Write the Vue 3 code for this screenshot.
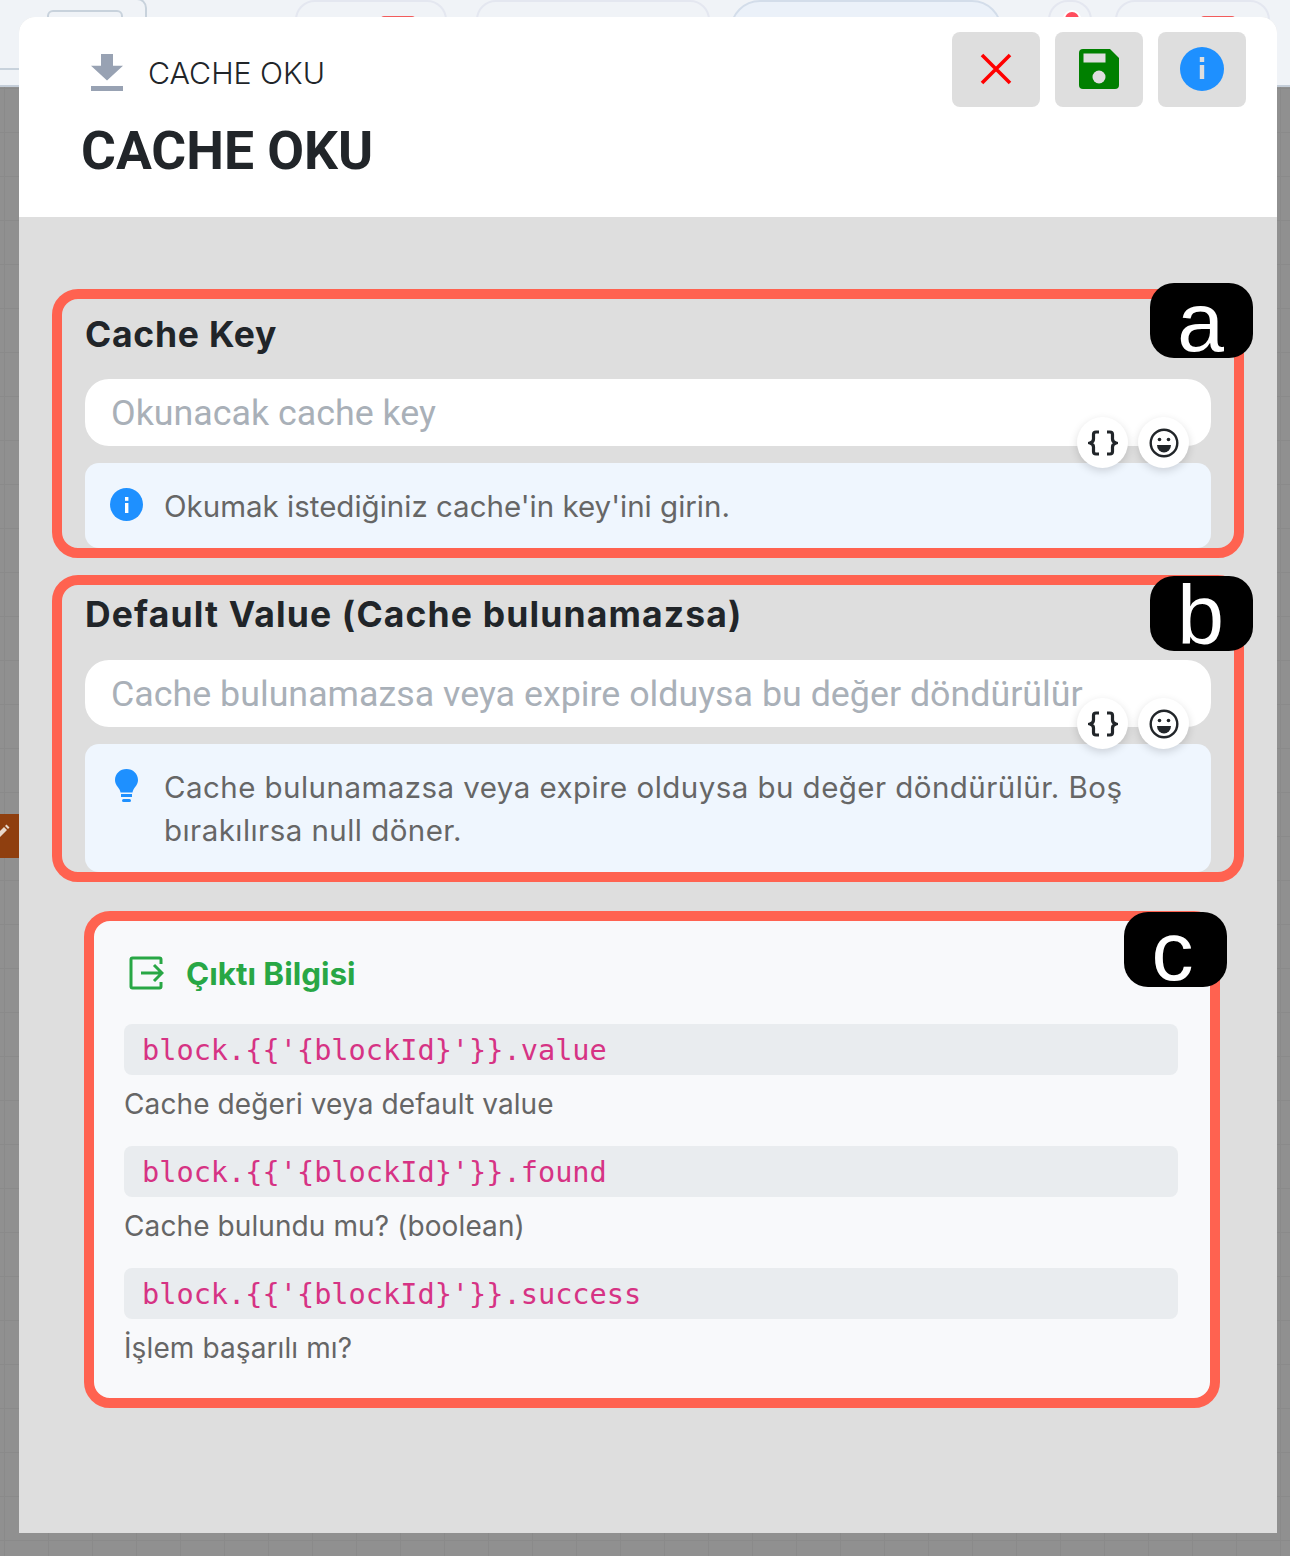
<script setup>
const outputs = [
  { name: 'value', desc: 'Cache değeri veya default value' },
  { name: 'found', desc: 'Cache bulundu mu? (boolean)' },
  { name: 'success', desc: 'İşlem başarılı mı?' }
]
const prefix = "block.{{'{blockId}'}}."
</script>

<template>
  <div class="page">
    <header class="topbar">
      <div class="tool-group"><span class="tool-inner"></span></div>
      <div class="tab t1"><i class="red-cap"></i></div>
      <div class="tab t2"></div>
      <div class="tab t3"></div>
      <div class="tab t4"><i class="red-dot"></i></div>
      <div class="tab t5"><i class="red-cap"></i></div>
    </header>
    <div class="canvas">
      <div class="node-edge">
        <svg width="14" height="14" viewBox="0 0 14 14"><path d="M0 14l1-4 7-7 3 3-7 7zM9 2l1.500-1.500 3 3L12 5z" fill="#e8d9cc"/></svg>
      </div>
    </div>

    <section class="modal">
      <div class="modal-head">
        <div class="head-main">
          <div class="crumb">
            <svg class="dl" viewBox="0 0 32 37"><path d="M10 0h12v15h10L16 34 0 15h10z" transform="scale(1 .78)" fill="#98a2b3"/><rect y="32" width="32" height="5" fill="#98a2b3"/></svg>
            <span>CACHE OKU</span>
          </div>
          <h1>CACHE OKU</h1>
        </div>
        <div class="actions">
          <button class="act">
            <svg width="32" height="32" viewBox="0 0 32 32"><path d="M2 2l28 28M30 2L2 30" stroke="#f00" stroke-width="3.600" fill="none"/></svg>
          </button>
          <button class="act">
            <svg width="40" height="40" viewBox="0 0 40 40"><path d="M4 0h27l9 9v27a4 4 0 0 1-4 4H4a4 4 0 0 1-4-4V4a4 4 0 0 1 4-4z" fill="#008000"/><rect x="4.500" y="4.500" width="22" height="9" fill="#dedede"/><circle cx="20" cy="28" r="6.500" fill="#dedede"/></svg>
          </button>
          <button class="act">
            <svg width="44" height="44" viewBox="0 0 44 44"><circle cx="22" cy="22" r="22" fill="#1e90ff"/><rect x="19.800" y="10" width="4.400" height="5" fill="#dedede"/><rect x="19.800" y="18" width="4.400" height="14" fill="#dedede"/></svg>
          </button>
        </div>
      </div>

      <div class="modal-body">
        <div class="field field-a">
          <span class="badge">a</span>
          <label class="field-label">Cache Key</label>
          <div class="input-wrap">
            <input class="text-input" placeholder="Okunacak cache key" />
            <div class="chips">
              <span class="chip">
                <svg width="30" height="26" viewBox="0 0 30 26" fill="none" stroke="#212529" stroke-width="3.200"><path d="M11 2H8Q5.500 2 5.500 4.500V9q0 3-3.500 4 3.500 1 3.500 4v4.500Q5.500 24 8 24h3M19 2h3q2.500 0 2.500 2.500V9q0 3 3.500 4-3.500 1-3.500 4v4.500Q24.500 24 22 24h-3"/></svg>
              </span>
              <span class="chip">
                <svg width="30" height="30" viewBox="0 0 30 30"><circle cx="15" cy="15" r="13.300" fill="none" stroke="#212529" stroke-width="2.400"/><circle cx="10.500" cy="11.500" r="1.800" fill="#212529"/><circle cx="19.500" cy="11.500" r="1.800" fill="#212529"/><path d="M8 17h14a7 7.500 0 0 1-14 0z" fill="#212529"/></svg>
              </span>
            </div>
          </div>
          <div class="help">
            <svg class="help-icon" width="33" height="33" viewBox="0 0 33 33"><circle cx="16.500" cy="16.500" r="16.500" fill="#1e90ff"/><rect x="15" y="9" width="3.400" height="3.800" fill="#fff"/><rect x="15" y="15" width="3.400" height="10" fill="#fff"/></svg>
            <p>Okumak istediğiniz cache'in key'ini girin.</p>
          </div>
        </div>

        <div class="field field-b">
          <span class="badge">b</span>
          <label class="field-label">Default Value (Cache bulunamazsa)</label>
          <div class="input-wrap">
            <input class="text-input" placeholder="Cache bulunamazsa veya expire olduysa bu değer döndürülür" />
            <div class="chips">
              <span class="chip">
                <svg width="30" height="26" viewBox="0 0 30 26" fill="none" stroke="#212529" stroke-width="3.200"><path d="M11 2H8Q5.500 2 5.500 4.500V9q0 3-3.500 4 3.500 1 3.500 4v4.500Q5.500 24 8 24h3M19 2h3q2.500 0 2.500 2.500V9q0 3 3.500 4-3.500 1-3.500 4v4.500Q24.500 24 22 24h-3"/></svg>
              </span>
              <span class="chip">
                <svg width="30" height="30" viewBox="0 0 30 30"><circle cx="15" cy="15" r="13.300" fill="none" stroke="#212529" stroke-width="2.400"/><circle cx="10.500" cy="11.500" r="1.800" fill="#212529"/><circle cx="19.500" cy="11.500" r="1.800" fill="#212529"/><path d="M8 17h14a7 7.500 0 0 1-14 0z" fill="#212529"/></svg>
              </span>
            </div>
          </div>
          <div class="help">
            <svg class="help-icon" width="33" height="33" viewBox="0 0 33 33"><path d="M16.500 0C10 0 5 4.800 5 11c0 4.500 3 7 4.500 9.500.6 1 .8 2 1 3h12c.2-1 .4-2 1-3C25 18 28 15.500 28 11 28 4.800 23 0 16.500 0z" fill="#1e90ff"/><rect x="11" y="25" width="11" height="3" fill="#1e90ff"/><rect x="12" y="30" width="9" height="3" rx="1.500" fill="#1e90ff"/></svg>
            <p class="wide">Cache bulunamazsa veya expire olduysa bu değer döndürülür. Boş<br />bırakılırsa null döner.</p>
          </div>
        </div>

        <div class="output">
          <span class="badge">c</span>
          <div class="output-title">
            <svg width="35" height="34" viewBox="0 0 35 34" fill="none" stroke="#28a745" stroke-width="3"><path d="M32 8V3.500Q32 2 30.500 2h-27Q2 2 2 3.500v27Q2 32 3.500 32h27q1.500 0 1.500-1.500V26"/><path d="M12 17h21M25 9l8 8-8 8"/></svg>
            <span>Çıktı Bilgisi</span>
          </div>
          <div v-for="o in outputs" :key="o.name" class="out-item">
            <code>{{ prefix + o.name }}</code>
            <p>{{ o.desc }}</p>
          </div>
        </div>
      </div>
    </section>
  </div>
</template>

<style scoped>
.page {
  position: relative;
  width: 1290px;
  height: 1556px;
  overflow: hidden;
  display: flex;
  flex-direction: column;
  font-family: Inter, "Noto Sans", sans-serif;
}
.topbar {
  height: 87px;
  flex: none;
  box-sizing: border-box;
  background: #f0f3f7;
  border-bottom: 2px solid #c5ced9;
  position: relative;
}
.tool-group {
  position: absolute;
  left: -10px;
  top: -2px;
  width: 157px;
  height: 72px;
  box-sizing: border-box;
  border: 2px solid #c8d2dc;
  border-radius: 10px;
  background: #f0f3f7;
}
.tool-inner {
  position: absolute;
  left: 55px;
  top: 10px;
  width: 76px;
  height: 40px;
  box-sizing: border-box;
  border: 2px solid #c8d2dc;
  border-radius: 6px;
}
.tab {
  position: absolute;
  top: 0;
  height: 60px;
  box-sizing: border-box;
  border: 2px solid #e4e7f0;
  border-radius: 20px;
}
.t1 { left: 295px; width: 152px; }
.t2 { left: 476px; width: 234px; }
.t3 { left: 730px; width: 272px; border-color: #d3ddea; background: #ebf1f9; border-radius: 30px; }
.t4 { left: 1048px; width: 44px; }
.t5 { left: 1115px; width: 155px; }
.red-cap {
  position: absolute;
  top: 14px;
  left: 84px;
  width: 34px;
  height: 6px;
  border-radius: 4px;
  background: #f25c5c;
}
.red-dot {
  position: absolute;
  top: 10px;
  left: 15px;
  width: 14px;
  height: 14px;
  border-radius: 50%;
  background: #ff4d5e;
  box-shadow: 0 0 0 2px #fff;
}
.canvas {
  flex: 1;
  position: relative;
  background-color: #909090;
  background-image:
    linear-gradient(#8a8a8a 1px, transparent 1px),
    linear-gradient(90deg, #8a8a8a 1px, transparent 1px);
  background-size: 44px 44px;
  background-position: 4px 1px;
}
.node-edge {
  position: absolute;
  left: 0;
  top: 727px;
  width: 19px;
  height: 44px;
  background: #8f3f0f;
  padding-top: 8px;
  box-sizing: border-box;
  overflow: hidden;
}
.node-edge svg { margin-left: -4px; }
.modal {
  position: absolute;
  left: 19px;
  top: 17px;
  width: 1258px;
  height: 1516px;
  background: #dedede;
  border-radius: 16px 16px 0 0;
  display: flex;
  flex-direction: column;
}
.modal-head {
  height: 200px;
  flex: none;
  box-sizing: border-box;
  background: #fff;
  border-radius: 16px 16px 0 0;
  padding: 15px 31px 0 62px;
  display: flex;
  justify-content: space-between;
}
.crumb {
  display: flex;
  align-items: flex-start;
  gap: 26px;
  padding: 22px 0 0 10px;
  font-size: 30.300px;
  font-weight: 300;
  color: #212529;
  line-height: 37px;
}
.crumb span { padding-top: 1px; margin-left: -1px; }
.dl { width: 32px; height: 37px; }
h1 {
  margin: 29px 0 0;
  font-family: Roboto, sans-serif;
  font-weight: 700;
  font-size: 53.400px;
  line-height: 60px;
  color: #212529;
}
.actions { display: flex; gap: 15px; align-items: flex-start; }
.act {
  width: 88px;
  height: 75px;
  padding: 0 0 1.500px;
  border: 0;
  border-radius: 8px;
  background: #dedede;
  display: flex;
  align-items: center;
  justify-content: center;
}
.modal-body {
  flex: 1;
  display: flex;
  flex-direction: column;
  padding: 72px 33px 0;
}
.field {
  position: relative;
  box-sizing: border-box;
  border: 10px solid #ff6250;
  border-radius: 26px;
  padding: 11px 23px 0;
}
.field-b { margin-top: 17px; padding-top: 5px; }
.field-label {
  display: block;
  height: 50px;
  line-height: 50px;
  margin-bottom: 19px;
  font-size: 35.500px;
  font-weight: 700;
  letter-spacing: .75px;
  color: #212529;
}
.field-b .field-label { margin-bottom: 20px; letter-spacing: 1.150px; }
.badge {
  position: absolute;
  right: -19px;
  top: -16px;
  width: 103px;
  height: 75px;
  border-radius: 24px;
  background: #000;
  color: #fff;
  font-family: "Liberation Sans", sans-serif;
  font-size: 84px;
  line-height: 78px;
  text-align: center;
  text-indent: -2px;
  z-index: 2;
}
.field-b .badge { top: -9px; }
.input-wrap { position: relative; margin-bottom: 17px; }
.text-input {
  display: block;
  width: 100%;
  height: 67px;
  box-sizing: border-box;
  border: 0;
  outline: 0;
  border-radius: 24px;
  padding: 0 26px;
  background: #fff;
  font-family: Roboto, sans-serif;
  font-size: 35.800px;
}
.text-input::placeholder { color: #a9b0b8; opacity: 1; }
.chips {
  position: absolute;
  right: 22px;
  bottom: -22px;
  display: flex;
  gap: 10px;
  z-index: 1;
}
.chip {
  width: 51px;
  height: 51px;
  border-radius: 50%;
  background: #fff;
  box-shadow: 0 3px 8px rgba(0, 0, 0, .15);
  display: flex;
  align-items: center;
  justify-content: center;
}
.help {
  display: flex;
  gap: 21px;
  padding: 22px 25px 20px;
  background: #eff6fe;
  border-radius: 14px;
}
.help-icon { flex: none; margin-top: 3px; }
.help p {
  margin: 0;
  font-size: 29.500px;
  line-height: 43px;
  color: #666;
  white-space: nowrap;
}
.help p.wide { letter-spacing: .45px; }
.output {
  position: relative;
  align-self: flex-start;
  width: 1136px;
  box-sizing: border-box;
  margin: 29px 0 0 32px;
  padding: 30px 32px 28px 30px;
  border: 10px solid #ff6250;
  border-radius: 26px;
  background: #f8f9fb;
}
.output .badge { right: -17px; top: -9px; text-indent: -6px; }
.output-title {
  display: flex;
  align-items: center;
  gap: 22px;
  padding-left: 5px;
  height: 44px;
  margin-bottom: 29px;
  font-size: 31.400px;
  font-weight: 700;
  color: #28a745;
}
.output-title span { padding-top: 1px; }
.out-item + .out-item { margin-top: 20px; }
code {
  display: block;
  height: 51px;
  line-height: 52px;
  padding-left: 18px;
  border-radius: 8px;
  background: #e9ecef;
  font-family: "DejaVu Sans Mono", monospace;
  font-size: 28.600px;
  color: #d63384;
}
.out-item p {
  margin: 0;
  height: 44px;
  line-height: 44px;
  margin-top: 7px;
  font-size: 28px;
  letter-spacing: .1px;
  color: #666;
}
</style>
